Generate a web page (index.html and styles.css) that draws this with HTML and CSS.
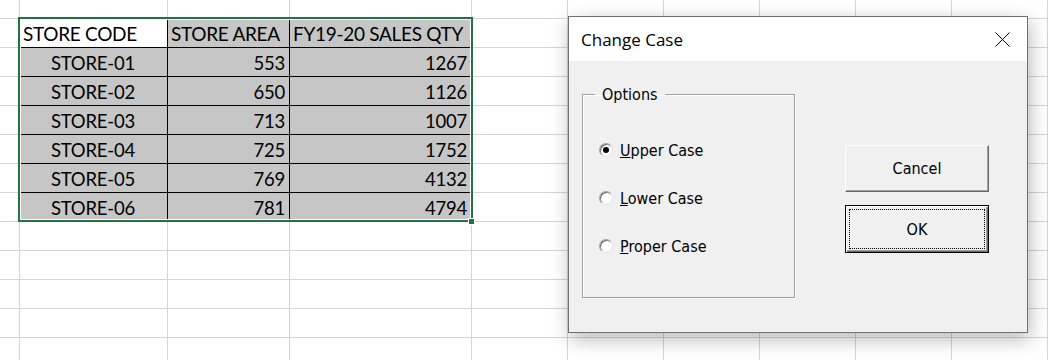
FILE: index.html
```html
<!DOCTYPE html>
<html>
<head>
    <title>Change Case</title>
    <link rel="stylesheet" href="styles.css">
</head>
<body>
    <div class="sheet">
        <div class="columns">
            <div></div><div></div><div></div><div></div><div></div><div></div>
            <div></div><div></div><div></div><div></div><div></div>
        </div>
        <div class="cells">
            <div class="range">
                <div class="cell head blank">STORE CODE</div>
                <div class="cell head">STORE AREA</div>
                <div class="cell head">FY19-20 SALES QTY</div>

                <div class="cell code">STORE-01</div>
                <div class="cell num">553</div>
                <div class="cell num">1267</div>

                <div class="cell code">STORE-02</div>
                <div class="cell num">650</div>
                <div class="cell num">1126</div>

                <div class="cell code">STORE-03</div>
                <div class="cell num">713</div>
                <div class="cell num">1007</div>

                <div class="cell code">STORE-04</div>
                <div class="cell num">725</div>
                <div class="cell num">1752</div>

                <div class="cell code">STORE-05</div>
                <div class="cell num">769</div>
                <div class="cell num">4132</div>

                <div class="cell code">STORE-06</div>
                <div class="cell num">781</div>
                <div class="cell num">4794</div>
            </div>
        </div>
    </div>

    <div class="dialog">
        <div class="titlebar">
            <span class="title">Change Case</span>
            <svg class="close" width="15" height="15" viewBox="0 0 15 15">
                <path d="M0.5 0.5 L14.5 14.5 M14.5 0.5 L0.5 14.5" stroke="#000" stroke-width="1" fill="none"/>
            </svg>
        </div>
        <div class="dialog-body">
            <fieldset class="options">
                <legend>Options</legend>
                <label class="option"><span class="radio checked"></span><span><u>U</u>pper Case</span></label>
                <label class="option"><span class="radio"></span><span><u>L</u>ower Case</span></label>
                <label class="option"><span class="radio"></span><span><u>P</u>roper Case</span></label>
            </fieldset>
            <div class="buttons">
                <button class="btn">Cancel</button>
                <button class="btn default"><span class="focus">OK</span></button>
            </div>
        </div>
    </div>
</body>
</html>
```

FILE: styles.css
```css
body {
    margin: 0;
    overflow: hidden;
    background-color: #ffffff;
    font-family: Lato, sans-serif;
}

/* worksheet */
.sheet {
    display: grid;
    height: 360px;
    background: linear-gradient(#d4d4d4 1px, transparent 1px) 0 18px / 100% 29px;
}

.columns,
.cells {
    grid-area: 1 / 1;
    min-width: 0;
}

.columns {
    display: grid;
    grid-template-columns: 19px 148px 122px 182px repeat(6, 96px) 1fr;
}

.columns div {
    border-left: 1px solid #d4d4d4;
}

.columns div:first-child {
    border-left: none;
}

.cells {
    padding: 18px 0 0 19px;
}

.range {
    position: relative;
    width: 452px;
    display: grid;
    grid-template-columns: 148px 122px 182px;
    grid-auto-rows: 29px;
}

.range::before {
    content: "";
    position: absolute;
    left: -1px;
    top: -1px;
    right: -2px;
    bottom: -1px;
    border: 2px solid #217346;
    box-shadow: inset 0 0 0 1px #ffffff;
}

.range::after {
    content: "";
    position: absolute;
    right: -4px;
    bottom: -4px;
    width: 7px;
    height: 7px;
    box-sizing: border-box;
    background-color: #217346;
    border: 1px solid #ffffff;
}

.cell {
    box-sizing: border-box;
    background-color: #c6c6c6;
    border-top: 1px solid #000000;
    border-left: 1px solid #000000;
    padding: 0 4px;
    font-size: 18.5px;
    letter-spacing: -0.2px;
    line-height: 30px;
    color: #000000;
    white-space: nowrap;
}

.range .cell:nth-child(3n+1) {
    border-left: none;
}

.cell.head {
    border-top: none;
    font-size: 19px;
    letter-spacing: -0.3px;
    line-height: 31px;
    padding: 0 2px 0 3px;
}

.cell.blank {
    background-color: #ffffff;
    padding-left: 4px;
}

.cell.code {
    text-align: center;
}

.cell.num {
    text-align: right;
}

/* dialog */
.dialog {
    position: absolute;
    left: 568px;
    top: 16px;
    width: 460px;
    height: 317px;
    box-sizing: border-box;
    border: 1px solid #707070;
    background-color: #f0f0f0;
    box-shadow: 2px 6px 18px rgba(0, 0, 0, 0.28);
    display: flex;
    flex-direction: column;
}

.titlebar {
    height: 44px;
    background-color: #ffffff;
    display: flex;
    align-items: center;
    justify-content: space-between;
    padding: 0 17px 0 12px;
}

.title {
    font-family: "Open Sans", sans-serif;
    font-size: 17px;
    color: #000000;
}

.dialog-body {
    display: flex;
    align-items: flex-start;
    padding-left: 13px;
    font-family: "DejaVu Sans Condensed", "DejaVu Sans", sans-serif;
    font-size: 16px;
    color: #000000;
}

.options {
    box-sizing: border-box;
    width: 213px;
    height: 213px;
    margin: 24px 0 0 0;
    padding: 34px 0 0 12px;
    border: 1px solid #a0a0a0;
    box-shadow: 1px 1px 0 #ffffff, inset 1px 1px 0 #ffffff;
}

.options legend {
    padding: 0 7px;
    line-height: 19px;
}

.option {
    display: flex;
    align-items: center;
    height: 24px;
    margin: 0 0 24px 4px;
}

.radio {
    position: relative;
    flex: none;
    width: 14px;
    height: 14px;
    box-sizing: border-box;
    margin-right: 7px;
    border-radius: 50%;
    background-color: #ffffff;
    border: 1px solid;
    border-color: #a0a0a0 #e3e3e3 #e3e3e3 #a0a0a0;
    box-shadow: inset 1px 1px 0 #696969;
}

.radio.checked::after {
    content: "";
    position: absolute;
    left: 3px;
    top: 3px;
    width: 6px;
    height: 6px;
    border-radius: 50%;
    background-color: #000000;
}

.buttons {
    display: flex;
    flex-direction: column;
    margin: 84px 0 0 50px;
}

.btn {
    width: 144px;
    height: 47px;
    padding: 0;
    background-color: #f0f0f0;
    border: 1px solid;
    border-color: #ffffff #696969 #696969 #ffffff;
    box-shadow: inset -1px -1px 0 #a0a0a0;
    font: inherit;
    color: #000000;
}

.btn.default {
    height: 48px;
    margin-top: 13px;
    padding: 3px;
    border: 1px solid #000000;
    box-shadow: inset 1px 1px 0 #ffffff, inset -1px -1px 0 #696969, inset -2px -2px 0 #a0a0a0;
}

.focus {
    display: flex;
    height: 100%;
    box-sizing: border-box;
    align-items: center;
    justify-content: center;
    border: 1px dotted #000000;
}
```
